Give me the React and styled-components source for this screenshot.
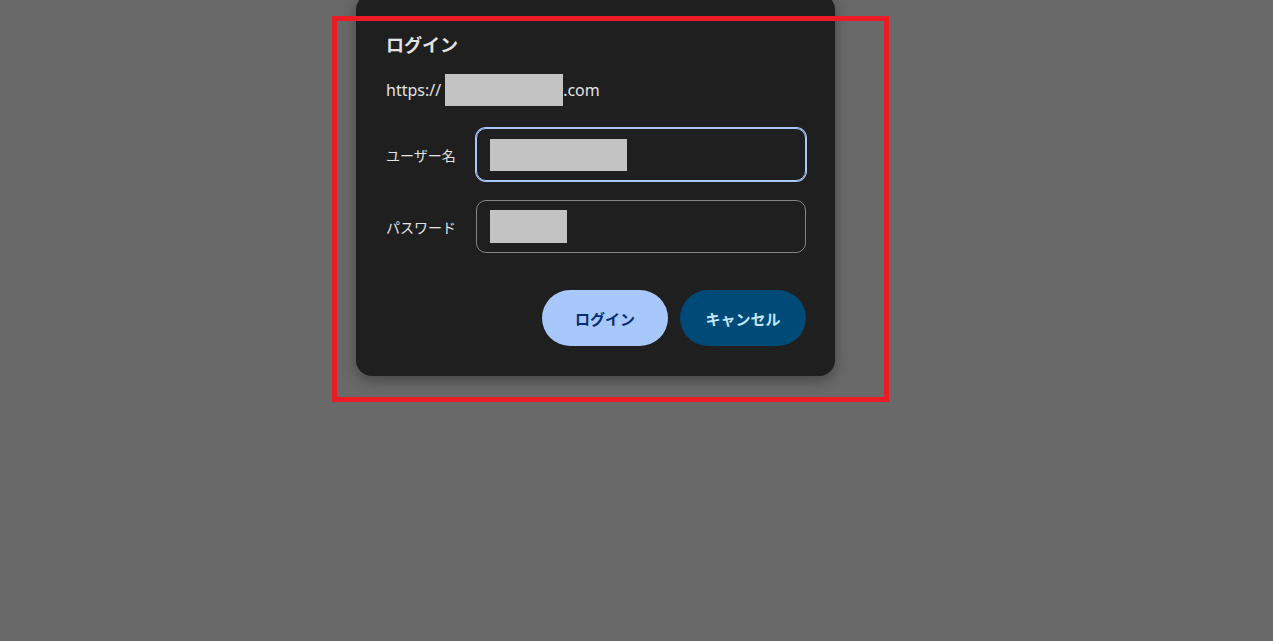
import React from "react";
import styled, { createGlobalStyle } from "styled-components";

const GlobalStyle = createGlobalStyle`
  html, body {
    margin: 0;
    padding: 0;
    background: #696969;
    font-family: "Noto Sans", "Noto Sans CJK JP", sans-serif;
  }
`;

const App = () => {
  return (
    <>
      <GlobalStyle />
      <Page>
        <Dialog>
          <Title>ログイン</Title>
          <Origin>
            https://
            <Redact $w={118} $h={32} $gap={4} />
            .com
          </Origin>
          <Form>
            <FieldRow>
              <Label>ユーザー名</Label>
              <InputBox $focused>
                <Redact $w={137} $h={32} />
              </InputBox>
            </FieldRow>
            <FieldRow>
              <Label>パスワード</Label>
              <InputBox>
                <Redact $w={77} $h={33} />
              </InputBox>
            </FieldRow>
          </Form>
          <Actions>
            <PillButton $variant="primary">ログイン</PillButton>
            <PillButton $variant="tonal">キャンセル</PillButton>
          </Actions>
        </Dialog>
        <Marker />
      </Page>
    </>
  );
};

export default App;

const Page = styled.div`
  position: relative;
  width: 1273px;
  height: 641px;
  overflow: hidden;
  padding-left: 356px;
  box-sizing: border-box;
`;

const Dialog = styled.section`
  width: 479px;
  margin-top: -6px;
  box-sizing: border-box;
  padding: 38px 29px 30px 30px;
  background: #1f1f1f;
  border-radius: 16px;
  box-shadow: 0 4px 14px rgba(0, 0, 0, 0.35);
  color: #e3e3e3;
`;

const Title = styled.h1`
  margin: 0;
  font-family: "Noto Sans CJK JP", sans-serif;
  font-size: 18px;
  font-weight: 700;
  line-height: 24px;
  color: #e3e3e3;
`;

const Origin = styled.div`
  display: flex;
  align-items: center;
  margin-top: 24px;
  height: 20px;
  font-size: 16px;
  line-height: 20px;
  color: #e3e3e3;
`;

const Redact = styled.span`
  display: inline-block;
  flex: none;
  margin-left: ${(p) => p.$gap || 0}px;
  width: ${(p) => p.$w}px;
  height: ${(p) => p.$h}px;
  background: #c3c3c3;
`;

const Form = styled.div`
  display: flex;
  flex-direction: column;
  gap: 19px;
  margin-top: 28px;
`;

const FieldRow = styled.div`
  display: grid;
  grid-template-columns: 90px 1fr;
  align-items: center;
`;

const Label = styled.label`
  font-family: "Noto Sans CJK JP", sans-serif;
  font-size: 14px;
  line-height: 20px;
  color: #e3e3e3;
`;

const InputBox = styled.div`
  display: flex;
  align-items: center;
  height: 53px;
  box-sizing: border-box;
  padding-left: 13px;
  border-radius: 10px;
  border: 1px solid ${(p) => (p.$focused ? "#a8c7fa" : "#858585")};
  box-shadow: ${(p) => (p.$focused ? "0 0 0 1px #a8c7fa" : "none")};
`;

const Actions = styled.div`
  display: flex;
  justify-content: flex-end;
  gap: 12px;
  margin-top: 37px;
`;

const PillButton = styled.button`
  width: 126px;
  height: 56px;
  border: none;
  border-radius: 28px;
  font-family: "Noto Sans CJK JP", sans-serif;
  font-size: 15px;
  font-weight: 700;
  background: ${(p) => (p.$variant === "primary" ? "#a8c7fa" : "#004a77")};
  color: ${(p) => (p.$variant === "primary" ? "#062e6f" : "#c2e7ff")};
`;

const Marker = styled.div`
  position: absolute;
  left: 332px;
  top: 16px;
  width: 557px;
  height: 386px;
  box-sizing: border-box;
  border: 5px solid #ed1c24;
  pointer-events: none;
`;
